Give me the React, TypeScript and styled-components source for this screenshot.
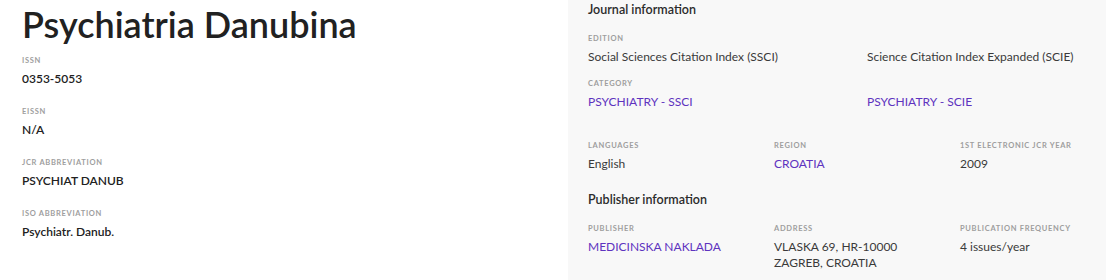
import * as React from 'react'
import styled, { createGlobalStyle } from 'styled-components'

const GlobalStyle = createGlobalStyle`
  html, body {
    margin: 0;
    padding: 0;
    background: #ffffff;
  }
  body {
    font-family: Lato, 'Noto Sans', sans-serif;
    color: #212121;
    -webkit-font-smoothing: antialiased;
  }
`

const App: React.FC = () => {
  return (
    <>
      <GlobalStyle />
      <Page>
        <Overview>
          <Title>Psychiatria Danubina</Title>
          <IdField>
            <Label>ISSN</Label>
            <IdValue>0353-5053</IdValue>
          </IdField>
          <IdField>
            <Label>EISSN</Label>
            <IdValue>N/A</IdValue>
          </IdField>
          <IdField>
            <Label>JCR Abbreviation</Label>
            <IdValue>PSYCHIAT DANUB</IdValue>
          </IdField>
          <IdField>
            <Label>ISO Abbreviation</Label>
            <IdValue>Psychiatr. Danub.</IdValue>
          </IdField>
        </Overview>

        <InfoPanel>
          <SectionTitle>Journal information</SectionTitle>
          <InfoField>
            <Label>Edition</Label>
            <Grid cols={2}>
              <Value>Social Sciences Citation Index (SSCI)</Value>
              <Value>Science Citation Index Expanded (SCIE)</Value>
            </Grid>
          </InfoField>
          <InfoField>
            <Label>Category</Label>
            <Grid cols={2}>
              <LinkValue>PSYCHIATRY - SSCI</LinkValue>
              <LinkValue>PSYCHIATRY - SCIE</LinkValue>
            </Grid>
          </InfoField>

          <Grid cols={3} spaced>
            <div>
              <Label>Languages</Label>
              <Value>English</Value>
            </div>
            <div>
              <Label>Region</Label>
              <LinkValue>CROATIA</LinkValue>
            </div>
            <div>
              <Label>1st Electronic JCR Year</Label>
              <Value>2009</Value>
            </div>
          </Grid>

          <SectionTitle later>Publisher information</SectionTitle>
          <Grid cols={3}>
            <div>
              <Label>Publisher</Label>
              <LinkValue>MEDICINSKA NAKLADA</LinkValue>
            </div>
            <div>
              <Label>Address</Label>
              <Value>
                VLASKA 69, HR-10000
                <br />
                ZAGREB, CROATIA
              </Value>
            </div>
            <div>
              <Label>Publication Frequency</Label>
              <Value>4 issues/year</Value>
            </div>
          </Grid>
        </InfoPanel>
      </Page>
    </>
  )
}
export default App

const Page = styled.div`
  display: flex;
  width: 1106px;
  height: 280px;
  overflow: hidden;
`
const Overview = styled.section`
  width: 546px;
  flex-shrink: 0;
  padding-left: 22px;
  padding-top: 1px;
`
const Title = styled.h1`
  margin: 0;
  padding-top: 2px;
  font-size: 36px;
  line-height: 42px;
  font-weight: 600;
  color: #212121;
  white-space: nowrap;
`
const Label = styled.div`
  font-size: 7.5px;
  line-height: 12px;
  font-weight: 700;
  letter-spacing: 0.7px;
  text-transform: uppercase;
  color: #9e9e9e;
  white-space: nowrap;
`
const IdField = styled.div`
  margin-top: 19px;
  &:first-of-type {
    margin-top: 10px;
  }
`
const IdValue = styled.div`
  margin-top: 4px;
  font-size: 12px;
  line-height: 16px;
  font-weight: 600;
  color: #212121;
  white-space: nowrap;
`
const InfoPanel = styled.section`
  flex: 1;
  background: #f8f8f8;
  padding-left: 20px;
  padding-top: 1px;
  overflow: hidden;
`
const SectionTitle = styled.h2<{ later?: boolean }>`
  margin: ${p => (p.later ? '19px' : '0')} 0 14px;
  font-size: 12.5px;
  line-height: 18px;
  font-weight: 600;
  color: #2b2b2b;
`
const InfoField = styled.div`
  & + & {
    margin-top: 13px;
  }
`
const Grid = styled.div<{ cols: number; spaced?: boolean }>`
  display: grid;
  grid-template-columns: repeat(${p => p.cols}, ${p => (p.cols === 2 ? '279px' : '186px')});
  margin-top: ${p => (p.spaced ? '30px' : '0')};
`
const Value = styled.div`
  margin-top: 4px;
  font-size: 12px;
  line-height: 16px;
  font-weight: 400;
  color: #3a3a3a;
  white-space: nowrap;
`
const LinkValue = styled(Value)`
  color: #5e33bf;
  cursor: pointer;
`
